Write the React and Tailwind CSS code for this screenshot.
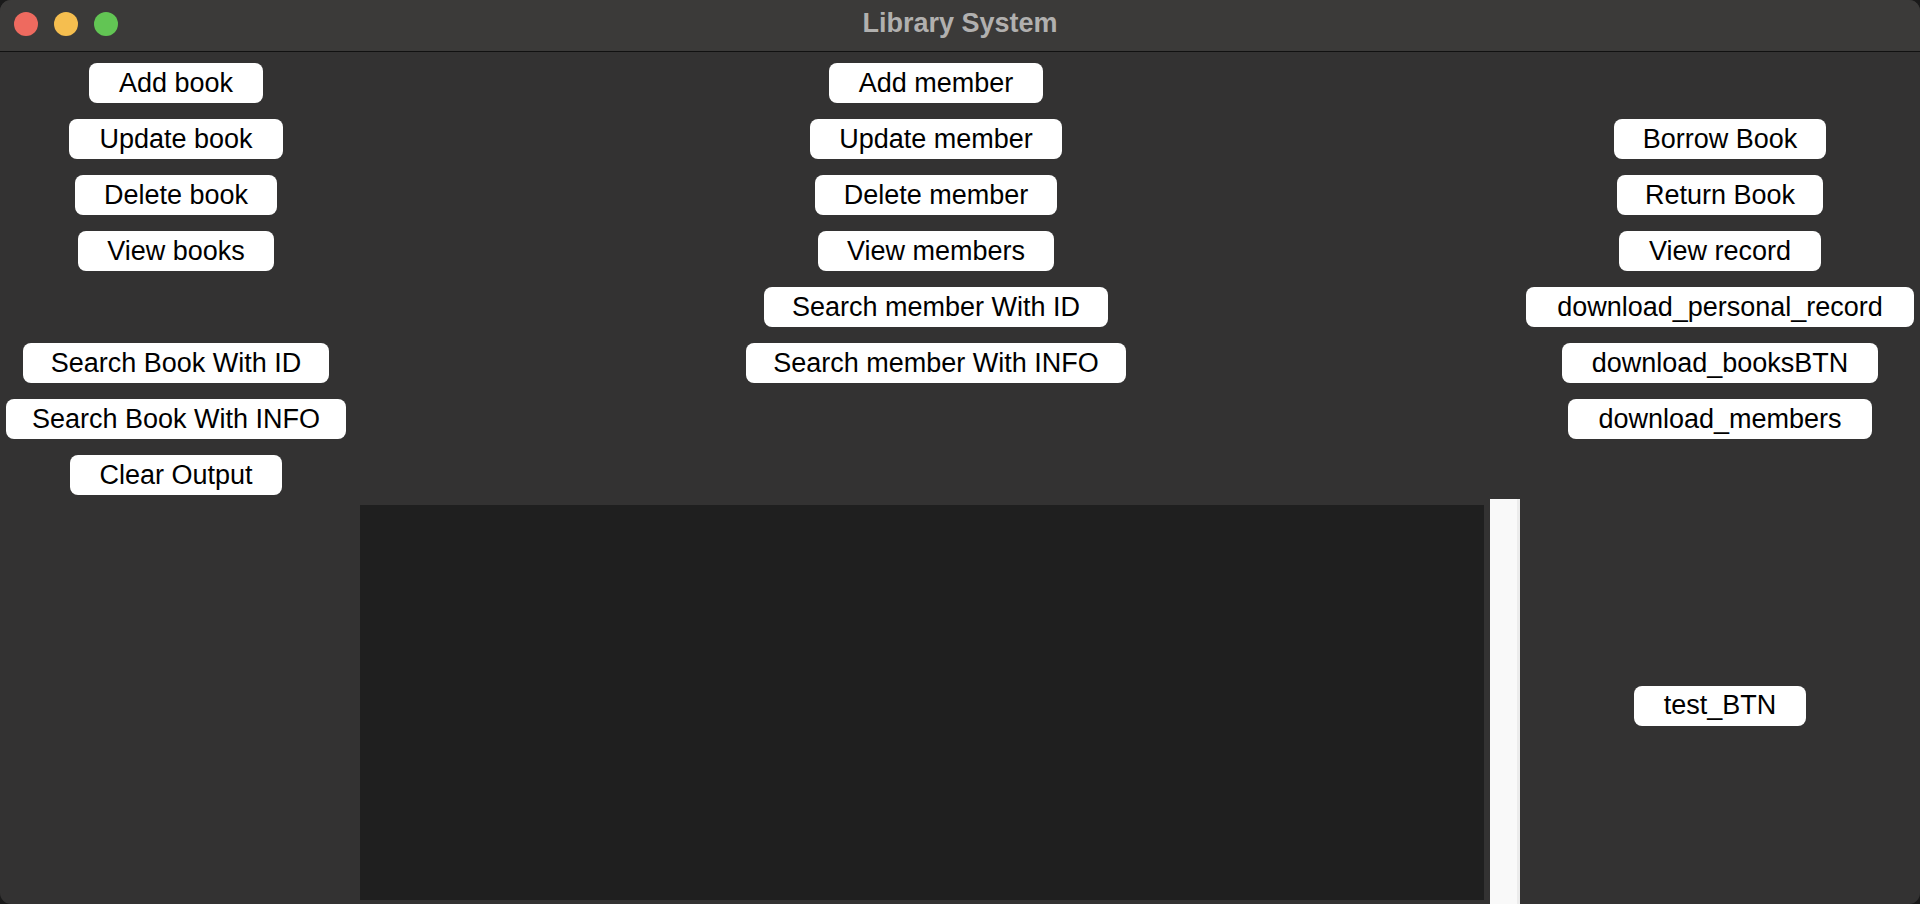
const font = { fontFamily: '"Liberation Sans", Arial, sans-serif' };

const leftCol = [
  { label: "Add book", w: "w-[174px]" },
  { label: "Update book", w: "w-[214px]" },
  { label: "Delete book", w: "w-[202px]" },
  { label: "View books", w: "w-[196px]" },
  null,
  { label: "Search Book With ID", w: "w-[306px]" },
  { label: "Search Book With INFO", w: "w-[340px]" },
  { label: "Clear Output", w: "w-[212px]" },
];

const midCol = [
  { label: "Add member", w: "w-[214px]" },
  { label: "Update member", w: "w-[252px]" },
  { label: "Delete member", w: "w-[242px]" },
  { label: "View members", w: "w-[236px]" },
  { label: "Search member With ID", w: "w-[344px]" },
  { label: "Search member With INFO", w: "w-[380px]" },
  null,
  null,
];

const rightCol = [
  null,
  { label: "Borrow Book", w: "w-[212px]" },
  { label: "Return Book", w: "w-[206px]" },
  { label: "View record", w: "w-[202px]" },
  { label: "download_personal_record", w: "w-[388px]" },
  { label: "download_booksBTN", w: "w-[316px]" },
  { label: "download_members", w: "w-[304px]" },
  null,
];

const Btn = ({ label, w }) => (
  <button
    className={`${w} h-10 shrink-0 rounded-lg bg-white text-black text-[27px] leading-none flex items-center justify-center whitespace-nowrap`}
    style={font}
  >
    {label}
  </button>
);

const Column = ({ items, width }) => (
  <div className={`${width} flex flex-col items-center`}>
    {items.map((b, i) => (
      <div
        key={i}
        className={`w-full flex justify-center pt-2 ${i === items.length - 1 ? "h-[52px]" : "h-14"}`}
      >
        {b && <Btn {...b} />}
      </div>
    ))}
  </div>
);

export default function App() {
  return (
    <div className="w-[1920px] h-[904px] bg-[#1a1a1a] overflow-hidden">
      <div className="w-full h-full rounded-[11px] overflow-hidden bg-[#333232] flex flex-col">
        {/* Title bar */}
        <div className="h-[52px] shrink-0 bg-[#3b3a39] border-b border-[#111111] relative flex items-center justify-center pb-[4px]">
          <div className="absolute left-[14px] top-[12px] flex gap-4">
            <span className="w-6 h-6 rounded-full bg-[#ee6a5f]" />
            <span className="w-6 h-6 rounded-full bg-[#f5be4f]" />
            <span className="w-6 h-6 rounded-full bg-[#62c554]" />
          </div>
          <span className="text-[27px] font-bold text-[#b1b0af]" style={font}>
            Library System
          </span>
        </div>

        {/* Button grid */}
        <div className="pt-[3px] flex">
          <Column items={leftCol} width="w-[352px]" />
          <Column items={midCol} width="w-[1168px]" />
          <Column items={rightCol} width="w-[400px]" />
        </div>

        {/* Bottom area */}
        <div className="flex-1 flex">
          <div className="w-[352px]" />
          <div className="w-[1168px] flex">
            <div className="ml-2 mt-[6px] mb-[4px] w-[1124px] bg-[#1f1f1f]" />
            <div className="ml-[6px] w-[30px] bg-[#f9f9f9] border-r-[3px] border-[#ececec]" />
          </div>
          <div className="w-[400px] flex items-center justify-center pt-[8px]">
            <Btn label="test_BTN" w="w-[172px]" />
          </div>
        </div>
      </div>
    </div>
  );
}
